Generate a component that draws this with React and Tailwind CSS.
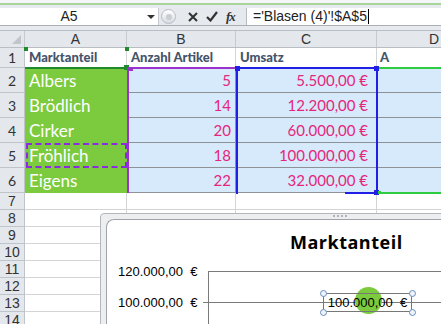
import React from 'react';

const rows = [
  { name: 'Albers', count: 5, sum: '5.500,00 €' },
  { name: 'Brödlich', count: 14, sum: '12.200,00 €' },
  { name: 'Cirker', count: 20, sum: '60.000,00 €' },
  { name: 'Fröhlich', count: 18, sum: '100.000,00 €' },
  { name: 'Eigens', count: 22, sum: '32.000,00 €' },
];

const cellFont = { fontFamily: '"Lato", "DejaVu Sans", sans-serif' };

function RowHead({ n, h }) {
  return (
    <div className={`${h} w-[25px] shrink-0 bg-[#e4e7eb] border-b border-r border-[#bfc4ca] flex items-center justify-center text-[14px] text-[#333]`}>
      {n}
    </div>
  );
}

export default function App() {
  return (
    <div className="relative w-[441px] h-[324px] overflow-hidden bg-white font-['Liberation_Sans',sans-serif] text-[#222]">
      {/* ribbon bottom edge */}
      <div className="h-[3px] bg-[#f4f6f8]" />
      <div className="h-[2px] bg-[#a6d49a]" />
      <div className="h-[3px] bg-[#e7eaee]" />

      {/* formula bar */}
      <div className="flex h-[18px] border-b border-[#a9aeb5]">
        <div className="relative w-[158px] bg-white flex items-center justify-center pr-[20px] text-[14px]">
          A5
          <svg className="absolute right-[3px] top-[7px]" width="8" height="5" viewBox="0 0 8 5">
            <path d="M0 0h8L4 4z" fill="#333" />
          </svg>
        </div>
        <div className="flex items-center w-[88px] bg-[#e6e9ed] border-l border-[#c6cad0]">
          <div className="ml-[2px] w-[15px] h-[15px] rounded-full bg-gradient-to-b from-white to-[#d8dbe0] border border-[#b8bcc3] flex items-center justify-center">
            <div className="w-[6px] h-[6px] rounded-full bg-[#c9ccd1]" />
          </div>
          <svg className="ml-[12px]" width="10" height="10" viewBox="0 0 10 10">
            <path d="M1 1l8 8M9 1l-8 8" stroke="#333" strokeWidth="2" />
          </svg>
          <svg className="ml-[8px]" width="12" height="11" viewBox="0 0 12 11">
            <path d="M1 6l3.5 3.5L11 1" stroke="#333" strokeWidth="2.2" fill="none" />
          </svg>
          <span className="ml-[8px] text-[13px] italic font-['Liberation_Serif',serif] font-bold tracking-[-1px] text-[#333]">fx</span>
        </div>
        <div className="flex-1 bg-white border-l border-[#b8bcc3] flex items-center pl-[6px] text-[14px]">
          ='Blasen (4)'!$A$5
          <span className="ml-[1px] w-[1px] h-[15px] bg-black" />
        </div>
      </div>
      <div className="h-[5px] bg-[#e7eaee] border-b border-[#b9bec4]" />

      {/* column headers */}
      <div className="flex h-[17px] bg-[#e4e7eb] border-b border-[#b9bec4] text-[14px] text-[#333]">
        <div className="relative w-[25px] border-r border-[#c6cad0]">
          <svg className="absolute right-[3px] bottom-[3px]" width="9" height="9" viewBox="0 0 9 9">
            <path d="M9 0v9H0z" fill="#c2c6cc" />
          </svg>
        </div>
        <div className="w-[102px] border-r border-[#c6cad0] flex items-center justify-center">A</div>
        <div className="w-[109px] border-r border-[#c6cad0] flex items-center justify-center">B</div>
        <div className="w-[141px] border-r border-[#c6cad0] flex items-center justify-center">C</div>
        <div className="flex-1 flex items-center justify-end pr-[2px]">D</div>
      </div>

      {/* sheet */}
      <div className="relative">
        <div className="flex h-[20px]" style={cellFont}>
          <RowHead n={1} h="h-[20px]" />
          <div className="w-[102px] border-b border-r border-[#d4d4d4] flex items-center pl-[4px] text-[13px] font-black text-[#44546a]">Marktanteil</div>
          <div className="w-[109px] border-b border-r border-[#d4d4d4] flex items-center pl-[4px] text-[13px] font-black text-[#44546a]">Anzahl Artikel</div>
          <div className="w-[141px] border-b border-r border-[#d4d4d4] flex items-center pl-[4px] text-[13px] font-black text-[#44546a]">Umsatz</div>
          <div className="flex-1 border-b border-[#d4d4d4] flex items-center pl-[3px] text-[13px] font-black text-[#44546a]">A</div>
        </div>
        {rows.map((r, i) => (
          <div key={r.name} className="flex h-[25px]" style={cellFont}>
            <RowHead n={i + 2} h="h-[25px]" />
            <div className="w-[102px] bg-[#7ccb3e] flex items-center pl-[4px] text-[17px] text-white">{r.name}</div>
            <div className="w-[109px] bg-[#d6eafb] border-b border-r border-[#8e9297] flex items-center justify-end pr-[4px] text-[15px] text-[#e5267c]">{r.count}</div>
            <div className="w-[141px] bg-[#d6eafb] border-b border-r border-[#8e9297] flex items-center justify-end pr-[8px] text-[15px] text-[#e5267c]">{r.sum}</div>
            <div className="flex-1 bg-[#d6eafb] border-b border-[#8e9297]" />
          </div>
        ))}
        {[7, 8, 9, 10, 11, 12, 13, 14].map((n) => (
          <div key={n} className="flex h-[17px]">
            <RowHead n={n} h="h-[17px]" />
            <div className="w-[102px] border-b border-r border-[#d4d4d4]" />
            <div className="w-[109px] border-b border-r border-[#d4d4d4]" />
            <div className="w-[141px] border-b border-r border-[#d4d4d4]" />
            <div className="flex-1 border-b border-[#d4d4d4]" />
          </div>
        ))}

        {/* reference highlights */}
        <div className="absolute left-[25px] top-[0px] w-[103px] h-[21px] border-b-2 border-[#1e8a2a]" />
        <div className="absolute left-[24px] top-[-1px] w-[4px] h-[4px] bg-[#1e8a2a]" />
        <div className="absolute left-[125px] top-[-1px] w-[4px] h-[4px] bg-[#1e8a2a]" />
        <div className="absolute left-[124px] top-[17px] w-[5px] h-[5px] bg-[#1e8a2a]" />
        <div className="absolute left-[127px] top-[19px] w-[110px] h-[2px] bg-[#9933cc]" />
        <div className="absolute left-[127px] top-[19px] w-[2px] h-[126px] bg-[#9933cc]" />
        <div className="absolute left-[129px] top-[19px] w-[4px] h-[4px] bg-[#9933cc]" />
        <div className="absolute left-[26px] top-[95px] w-[101px] h-[25px] border-2 border-dashed border-[#8a2be2]" />
        <div className="absolute left-[236px] top-[19px] w-[142px] h-[127px] border-2 border-[#1f1fe6] border-b-0" />
        <div className="absolute left-[345px] top-[144px] w-[33px] h-[2px] bg-[#1f1fe6]" />
        <div className="absolute left-[235px] top-[18px] w-[5px] h-[5px] bg-[#1f1fe6]" />
        <div className="absolute left-[374px] top-[18px] w-[5px] h-[5px] bg-[#1f1fe6]" />
        <div className="absolute left-[374px] top-[142px] w-[5px] h-[5px] bg-[#1f1fe6]" />
        <div className="absolute left-[379px] top-[19px] right-0 h-[2px] bg-[#2ecc40]" />
        <div className="absolute left-[379px] top-[144px] right-0 h-[2px] bg-[#2ecc40]" />
        <div className="absolute left-[378px] top-[143px] w-[3px] h-[3px] bg-[#2ecc40]" />
      </div>

      {/* chart */}
      <div className="absolute left-[100px] top-[213px] w-[360px] h-[130px] bg-[#eceef0] border border-[#b4b8bd] rounded-tl-[4px] pl-[5px] pt-[5px]">
        <div className="absolute left-[232px] top-[1px] flex gap-[2px]">
          {[0, 1, 2, 3].map((k) => (
            <div key={k} className="w-[2px] h-[2px] bg-[#b0b3b8]" />
          ))}
        </div>
        <div className="relative w-full h-full bg-white border-l border-t border-[#a0a4aa] rounded-tl-[8px]">
          <div className="pt-[13px] pl-[183px] text-[18px] font-bold text-black font-['Open_Sans',sans-serif] leading-none tracking-[0.5px]">
            Marktanteil
          </div>
          <div className="absolute left-[11px] top-[42px] text-[13px] text-black">120.000,00 &nbsp;€</div>
          <div className="absolute left-[11px] top-[73px] text-[13px] text-black">100.000,00 &nbsp;€</div>
          <div className="absolute left-[101px] top-[51px] w-[260px] h-[1px] bg-[#7a7a7a]" />
          <div className="absolute left-[96px] top-[82px] w-[260px] h-[1px] bg-[#7a7a7a]" />
          <div className="absolute left-[101px] top-[51px] w-[1px] h-[80px] bg-[#7a7a7a]" />
          {/* data label with point */}
          <div className="absolute left-[248px] top-[67px] w-[27px] h-[27px] rounded-full bg-[#7ccb3e]" />
          <div className="absolute left-[216px] top-[73px] w-[89px] h-[19px] border border-[#777] flex items-center justify-center text-[13px] text-black">
            100.000,00 &nbsp;€
          </div>
          {[
            [213, 70],
            [302, 70],
            [213, 89],
            [302, 89],
          ].map(([x, y]) => (
            <div
              key={`${x}-${y}`}
              className="absolute w-[7px] h-[7px] rounded-full border border-[#6a8fb8] bg-[#eef4fb]"
              style={{ left: x, top: y }}
            />
          ))}
        </div>
      </div>
    </div>
  );
}
